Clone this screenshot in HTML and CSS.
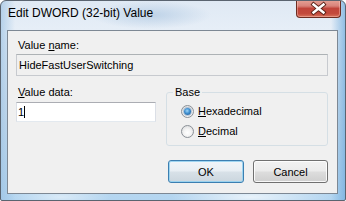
FILE: index.html
```html
<!DOCTYPE html>
<html>
<head>
<meta charset="utf-8">
<link rel="stylesheet" href="styles.css">
</head>
<body>
<div class="window">
  <div class="titlebar">
    <span class="title">Edit DWORD (32-bit) Value</span>
    <button class="close" aria-label="Close">
      <svg width="45" height="18" viewBox="0 0 45 18">
        <path d="M17.5 4.5 L27.5 12.5 M27.5 4.5 L17.5 12.5" stroke="#5b2218" stroke-width="4.2" stroke-linecap="square" fill="none"/>
        <path d="M17.5 4.5 L27.5 12.5 M27.5 4.5 L17.5 12.5" stroke="#ffffff" stroke-width="2.4" stroke-linecap="square" fill="none"/>
      </svg>
    </button>
  </div>
  <div class="client">
    <div class="label label-name">Value <u>n</u>ame:</div>
    <div class="textbox disabled">HideFastUserSwitching</div>
    <div class="row">
      <div class="col">
        <div class="label label-data"><u>V</u>alue data:</div>
        <div class="textbox edit">1<span class="caret"></span></div>
      </div>
      <fieldset class="group">
        <legend>Base</legend>
        <div class="radio-row"><span class="radio checked"></span><span class="radio-text"><u>H</u>exadecimal</span></div>
        <div class="radio-row"><span class="radio"></span><span class="radio-text"><u>D</u>ecimal</span></div>
      </fieldset>
    </div>
    <div class="buttons">
      <button class="btn default">OK</button>
      <button class="btn">Cancel</button>
    </div>
  </div>
</div>
</body>
</html>
```
FILE: styles.css
```css
html, body {
  margin: 0;
  padding: 0;
  background: #ffffff;
}
body {
  font-family: "Liberation Sans", Arial, sans-serif;
  font-size: 11px;
  color: #000;
}
.window {
  box-sizing: border-box;
  width: 346px;
  height: 201px;
  border: 1px solid #5a6470;
  border-radius: 6px 6px 2px 2px;
  overflow: hidden;
  display: flex;
  flex-direction: column;
  background:
    radial-gradient(ellipse 60px 14px at 150px 14px, rgba(160,190,220,0.55), rgba(160,190,220,0) 100%),
    radial-gradient(ellipse 80px 12px at 250px 196px, rgba(255,255,255,0.7), rgba(255,255,255,0) 100%),
    radial-gradient(ellipse 50px 10px at 60px 196px, rgba(255,255,255,0.5), rgba(255,255,255,0) 100%),
    linear-gradient(90deg, rgba(150,190,225,0.6) 0px, rgba(150,190,225,0) 14px, rgba(150,190,225,0) 330px, rgba(110,170,220,0.8) 346px),
    linear-gradient(180deg, #dfe9f4 0px, #e6eef7 28px, #cddfee 120px, #b3d5f0 201px);
}
.titlebar {
  height: 29px;
  flex: none;
  display: flex;
  align-items: flex-start;
  padding-left: 7px;
  padding-right: 4px;
}
.title {
  font-size: 12px;
  line-height: 15px;
  margin-top: 5px;
  color: #000;
}
.close {
  margin-left: auto;
  margin-top: -1px;
  width: 45px;
  height: 18px;
  padding: 0;
  border: 1px solid #6e2d22;
  border-top: none;
  border-radius: 0 0 4px 4px;
  background: linear-gradient(180deg, #e6a397 0%, #d9837a 35%, #c0443a 50%, #c34a3c 80%, #d9735c 100%);
  box-shadow: inset 0 0 0 1px rgba(255,210,200,0.4);
  display: flex;
  align-items: center;
  justify-content: center;
  box-sizing: border-box;
}
.close svg {
  display: block;
  flex: none;
}
.client {
  box-sizing: border-box;
  margin: 0 7px 0 6px;
  height: 164px;
  flex: none;
  border: 1px solid #7d8894;
  background: #f0f0f0;
  padding: 7px 9px 0 8px;
  display: flex;
  flex-direction: column;
}
.label {
  line-height: 15px;
  height: 15px;
  padding-left: 2px;
}
u {
  text-decoration: underline;
  text-underline-offset: 1px;
}
.textbox {
  box-sizing: border-box;
  border: 1px solid #abadb3;
  border-left-color: #dbdfe6;
  border-right-color: #dbdfe6;
  border-bottom-color: #e3e9ef;
  line-height: 18px;
  white-space: nowrap;
}
.textbox.disabled {
  margin-top: 1px;
  height: 22px;
  padding: 1px 3px 0 2px;
  background: #f0f0f0;
  border-color: #c7cacf;
  border-top-color: #adb2b5;
}
.textbox.edit {
  margin-top: 2px;
  height: 20px;
  width: 140px;
  background: #ffffff;
  padding: 0 1px;
  display: flex;
  align-items: center;
}
.caret {
  display: inline-block;
  width: 1px;
  height: 12px;
  background: #000;
}
.row {
  display: flex;
  gap: 10px;
  margin-top: 9px;
  align-items: flex-start;
}
.col {
  width: 140px;
  display: flex;
  flex-direction: column;
}
.group {
  box-sizing: border-box;
  margin: 0;
  width: 162px;
  height: 61px;
  border: 1px solid #d5dfe5;
  border-radius: 3px;
  padding: 1px 4px 4px 14px;
}
.group legend {
  padding: 0 2px;
  margin-left: -8px;
  line-height: 15px;
  height: 15px;
}
.radio-row {
  display: flex;
  align-items: center;
  height: 20px;
}
.radio {
  box-sizing: border-box;
  width: 13px;
  height: 13px;
  border-radius: 50%;
  border: 1px solid #8b9097;
  background: radial-gradient(circle at 50% 60%, #ffffff 0%, #f4f4f4 40%, #d2d4d6 100%);
  margin-right: 4px;
  flex: none;
  display: flex;
  align-items: center;
  justify-content: center;
}
.radio.checked::after {
  content: "";
  width: 7px;
  height: 7px;
  border-radius: 50%;
  background: radial-gradient(circle at 45% 40%, #9fd6f8 0%, #3f8fd0 45%, #1b4f86 100%);
  box-shadow: 0 0 0 1px rgba(60,110,160,0.35);
}
.radio-text {
  line-height: 15px;
}
.buttons {
  display: flex;
  justify-content: flex-end;
  gap: 9px;
  margin-top: 14px;
}
.btn {
  box-sizing: border-box;
  width: 75px;
  height: 23px;
  padding: 0;
  font-family: "Liberation Sans", Arial, sans-serif;
  font-size: 11px;
  color: #000;
  border: 1px solid #707070;
  border-radius: 3px;
  background: linear-gradient(180deg, #f2f2f2 0%, #ebebeb 48%, #dddddd 52%, #cfcfcf 100%);
  box-shadow: inset 0 0 0 1px rgba(255,255,255,0.85);
}
.btn.default {
  width: 76px;
  border-color: #3c7fb1;
  background: linear-gradient(180deg, #f0f5f9 0%, #e8eef3 48%, #d8e1e8 52%, #cbd6de 100%);
  box-shadow: inset 0 0 0 1px rgba(150,210,240,0.9);
}
```
